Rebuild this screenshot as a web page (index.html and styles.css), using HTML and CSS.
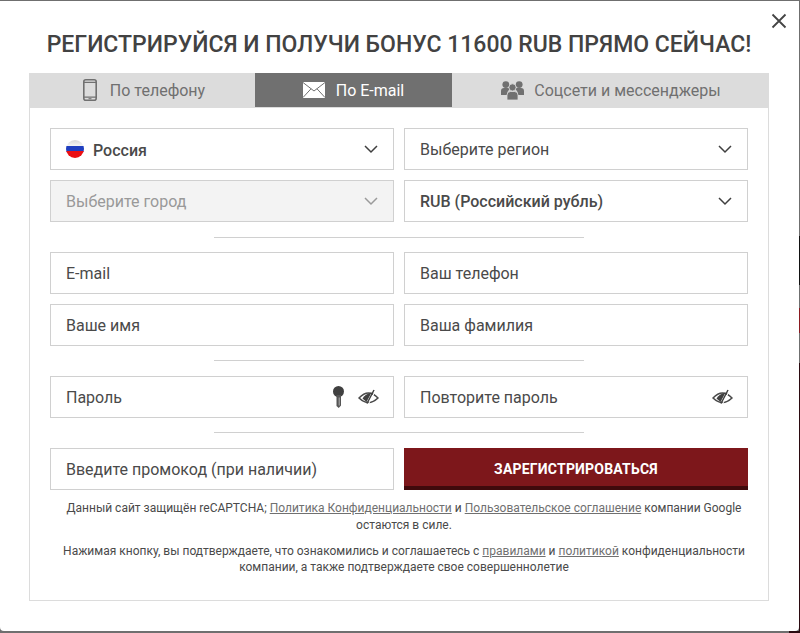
FILE: index.html
```html
<!DOCTYPE html>
<html lang="ru">
<head>
<meta charset="utf-8">
<title>Регистрация</title>
<link rel="stylesheet" href="styles.css">
</head>
<body>
<div class="modal">
  <button class="close" aria-label="Закрыть">
    <svg width="16" height="16" viewBox="0 0 16 16"><path d="M1.500 1.500l13 13M14.500 1.500l-13 13" stroke="#444" stroke-width="1.800" fill="none"/></svg>
  </button>
  <h1 class="title">Регистрируйся и получи бонус 11600 RUB прямо сейчас!</h1>
  <div class="tabs">
    <div class="tab tab-phone">
      <svg width="14" height="22" viewBox="0 0 14 22"><rect x="0.800" y="0.800" width="12.400" height="20.400" rx="2" fill="none" stroke="#707070" stroke-width="1.600"/><path d="M1 3.400h12M1 18.200h12" stroke="#707070" stroke-width="1.200"/><rect x="5.500" y="19.200" width="3" height="1" fill="#707070"/></svg>
      <span>По телефону</span>
    </div>
    <div class="tab tab-mail active">
      <svg width="22" height="16" viewBox="0 0 22 16"><rect width="22" height="16" fill="#fff"/><path d="M0 .5l11 8.500L22 .5M0 15.500l8-8.700M22 15.500l-8-8.700" fill="none" stroke="#707070" stroke-width="1"/></svg>
      <span>По E-mail</span>
    </div>
    <div class="tab tab-social">
      <svg width="23" height="19" viewBox="0 0 23 19"><g fill="#707070"><circle cx="4.800" cy="3.600" r="3.400"/><circle cx="18.200" cy="3.600" r="3.400"/><path d="M0 14V10Q0 7 3 7h4q1.500 0 2 1-3 2-3 6z"/><path d="M23 14V10Q23 7 20 7h-4q-1.500 0-2 1 3 2 3 6z"/><circle cx="11.500" cy="6.400" r="3.600" stroke="#dcdcdc" stroke-width=".8"/><path d="M6 19v-5q0-3.500 3.500-3.500h4q3.500 0 3.500 3.500v5z" stroke="#dcdcdc" stroke-width=".8"/></g></svg>
      <span>Соцсети и мессенджеры</span>
    </div>
  </div>
  <form class="panel">
    <div class="grid">
      <div class="field strong">
        <svg class="flag" width="18" height="18" viewBox="0 0 18 18"><defs><clipPath id="c"><circle cx="9" cy="9" r="9"/></clipPath><linearGradient id="s" x1="0" y1="0" x2="0" y2="1"><stop offset="0" stop-color="#d8d8d8"/><stop offset="1" stop-color="#f6f6f6"/></linearGradient></defs><g clip-path="url(#c)"><rect width="18" height="6" fill="url(#s)"/><rect y="6" width="18" height="6" fill="#1f3fc0"/><rect y="11" width="18" height="7" fill="#ea0f14"/></g></svg>
        <span>Россия</span><svg class="chev" width="14" height="9" viewBox="0 0 14 9"><path d="M1 1l6 6 6-6" fill="none" stroke="#3f3f3f" stroke-width="1.500"/></svg>
      </div>
      <div class="field"><span>Выберите регион</span><svg class="chev" width="14" height="9" viewBox="0 0 14 9"><path d="M1 1l6 6 6-6" fill="none" stroke="#3f3f3f" stroke-width="1.500"/></svg></div>
      <div class="field disabled"><span>Выберите город</span><svg class="chev" width="14" height="9" viewBox="0 0 14 9"><path d="M1 1l6 6 6-6" fill="none" stroke="#9a9a9a" stroke-width="1.500"/></svg></div>
      <div class="field medium"><span>RUB (Российский рубль)</span><svg class="chev" width="14" height="9" viewBox="0 0 14 9"><path d="M1 1l6 6 6-6" fill="none" stroke="#3f3f3f" stroke-width="1.500"/></svg></div>
    </div>
    <hr class="rule">
    <div class="grid">
      <div class="field"><span>E-mail</span></div>
      <div class="field"><span>Ваш телефон</span></div>
      <div class="field"><span>Ваше имя</span></div>
      <div class="field"><span>Ваша фамилия</span></div>
    </div>
    <hr class="rule rule-b">
    <div class="grid">
      <div class="field">
        <span>Пароль</span>
        <svg class="key" width="11" height="22" viewBox="0 0 11 22"><circle cx="5.500" cy="5.500" r="5.500" fill="#404040"/><path d="M3.500 9h4.500v10.500L5.700 22 3.500 20z" fill="#555"/><path d="M6.200 11.500v8" stroke="#c8c8c8" stroke-width=".8"/></svg>
        <svg class="eye" width="21" height="17" viewBox="0 0 21 17"><path d="M1 9Q10.500-1 20 9 10.500 18 1 9z" fill="none" stroke="#4a4a4a" stroke-width="1.500"/><path d="M4.500 9.500Q7 5 13.500 3.500L8.500 13z" fill="#404040"/><path d="M16 1L9 14.500" stroke="#404040" stroke-width="1.500"/><path d="M17.300 2L10.500 15" stroke="#fff" stroke-width="1"/></svg>
      </div>
      <div class="field">
        <span>Повторите пароль</span>
        <svg class="eye" width="21" height="17" viewBox="0 0 21 17"><path d="M1 9Q10.500-1 20 9 10.500 18 1 9z" fill="none" stroke="#4a4a4a" stroke-width="1.500"/><path d="M4.500 9.500Q7 5 13.500 3.500L8.500 13z" fill="#404040"/><path d="M16 1L9 14.500" stroke="#404040" stroke-width="1.500"/><path d="M17.300 2L10.500 15" stroke="#fff" stroke-width="1"/></svg>
      </div>
    </div>
    <hr class="rule rule-c">
    <div class="grid">
      <div class="field"><span>Введите промокод (при наличии)</span></div>
      <button type="button" class="submit">Зарегистрироваться</button>
    </div>
    <p class="note note-a">Данный сайт защищён reCAPTCHA; <a href="#">Политика Конфиденциальности</a> и <a href="#">Пользовательское соглашение</a> компании Google остаются в силе.</p>
    <p class="note note-b">Нажимая кнопку, вы подтверждаете, что ознакомились и соглашаетесь с <a href="#">правилами</a> и <a href="#">политикой</a> конфиденциальности компании, а также подтверждаете свое совершеннолетие</p>
  </form>
</div>
</body>
</html>
```

FILE: styles.css
```css
* { box-sizing: border-box; }
html, body { margin: 0; height: 633px; overflow: hidden; }
body {
  background:
    linear-gradient(#2b0a10, #2b0a10) right bottom / 11px 2px no-repeat,
    linear-gradient(#6f6f6f 236px, #111 236px 285px, #6f6f6f 285px 308px, #8a1a20 308px 333px, #6f6f6f 333px 363px, #2b0a10 363px) right top / 1px 100% no-repeat,
    #6f6f6f;
  padding-top: 1px;
  font-family: Roboto, sans-serif;
  color: #4a4a4a;
}
.modal {
  position: relative;
  width: 799px;
  height: 630px;
  background: #fff;
  border-radius: 0 0 4px 4px;
  padding: 0 30px 0 29px;
}
.close { position: absolute; top: 11px; right: 11px; width: 18px; height: 18px; padding: 0; border: 0; background: none; display: flex; align-items: center; justify-content: center; }
.title { margin: 0; padding-top: 29px; height: 72px; font-size: 23px; line-height: 29px; font-weight: 500; text-transform: uppercase; text-align: center; color: #424242; white-space: nowrap; }
.tabs { display: grid; grid-template-columns: 225px 199px 316px; width: 740px; height: 35px; background: #dcdcdc; }
.tab { display: flex; align-items: center; justify-content: center; gap: 10px; font-size: 16px; color: #707070; height: 34px; }
.tab-phone { gap: 13px; padding-left: 5px; }
.tab-mail { gap: 11px; }
.tab.active { background: #707070; color: #fff; margin: 0 1px; }
.panel { width: 740px; height: 493px; border: 1px solid #dcdcdc; border-top: 0; padding: 20px 20px 0; }
.grid { display: grid; grid-template-columns: 344px 344px; gap: 10px; }
.field { height: 42px; border: 1px solid #d0d0d0; background: #fff; padding: 0 15px; display: flex; align-items: center; font-size: 16px; color: #4a4a4a; }
.field > span { flex: 1; white-space: nowrap; }
.strong { font-weight: 500; }
.strong > span { padding-top: 2px; }
.medium { font-weight: 500; }
.disabled { background: #f3f3f3; color: #999; }
.flag { margin-right: 9px; flex: none; }
.chev { flex: none; }
.key { margin-right: 14px; flex: none; }
.eye { flex: none; margin-right: -1px; }
.rule { width: 370px; height: 1px; margin: 15px auto 14px; border: 0; background: #d0d0d0; }
.rule-b { margin: 14px auto 15px; }
.rule-c { margin: 14px auto 15px; }
.submit { height: 42px; border: 0; border-bottom: 4px solid #3f0a0c; background: #7d171b; color: #fff; font: 700 14px Roboto, sans-serif; letter-spacing: .2px; text-transform: uppercase; padding: 3px 0 0; }
.note { margin: 0; padding-left: 10px; font-size: 12px; line-height: 17px; text-align: center; color: #4a4a4a; }
.note-a { margin-top: 10px; }
.note-b { margin-top: 9px; line-height: 16px; }
.note a { color: #707070; text-decoration: underline; }
```
